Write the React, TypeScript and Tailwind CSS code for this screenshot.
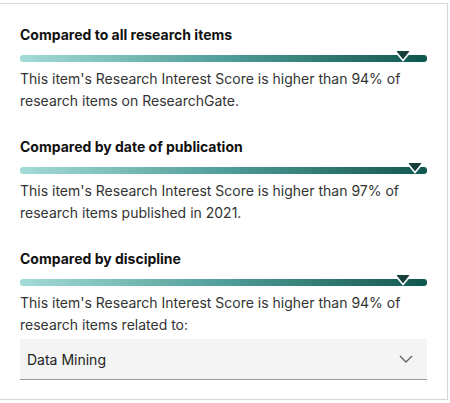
const SECTIONS = [
  {
    title: "Compared to all research items",
    pct: 94,
    text: "This item's Research Interest Score is higher than 94% of research items on ResearchGate.",
  },
  {
    title: "Compared by date of publication",
    pct: 97,
    text: "This item's Research Interest Score is higher than 97% of research items published in 2021.",
  },
  {
    title: "Compared by discipline",
    pct: 94,
    text: "This item's Research Interest Score is higher than 94% of research items related to:",
  },
];

function ScoreBar({ pct }: { pct: number }) {
  return (
    <div className="relative h-[7px] rounded-[3px] bg-gradient-to-r from-[#a3dbd8] via-[#4f9e98] to-[#0d574f]">
      <svg
        className="absolute top-[-4px] -translate-x-1/2"
        style={{ left: `${pct}%` }}
        width="14"
        height="11"
        viewBox="0 0 14 11"
      >
        <polygon points="0.5,0 13.5,0 7,9.5" fill="#163f3a" />
        <polyline points="1.5,3 7,9.5 12.5,3" fill="none" stroke="#ffffff" strokeWidth="1.6" />
      </svg>
    </div>
  );
}

export default function App() {
  return (
    <div
      className="h-[403px] w-[450px] bg-white pt-[3px]"
      style={{ fontFamily: "Inter, 'Noto Sans', sans-serif" }}
    >
      <div className="h-[397px] w-[448px] border-t border-r border-b border-[#d6d6d6] px-5 pt-[21px]">
        <div className="flex flex-col gap-[25px]">
          {SECTIONS.map((s) => (
            <div key={s.title}>
              <h3 className="text-[14px] font-bold leading-5 text-[#111111]">{s.title}</h3>
              <div className="mt-[10px]">
                <ScoreBar pct={s.pct} />
              </div>
              <p className="mt-[6px] text-[14px] leading-[22px] text-[#333333]">{s.text}</p>
            </div>
          ))}
        </div>
        <button
          type="button"
          className="mt-[3px] flex h-[41px] w-full items-center justify-between border-b border-[#9a9a9a] bg-[#f4f4f4] pl-[7px] pr-[14px] text-left text-[14px] text-[#222222]"
        >
          <span>Data Mining</span>
          <svg width="14" height="8" viewBox="0 0 14 8" fill="none">
            <polyline points="1,1 7,7 13,1" stroke="#666666" strokeWidth="1.4" />
          </svg>
        </button>
      </div>
    </div>
  );
}
